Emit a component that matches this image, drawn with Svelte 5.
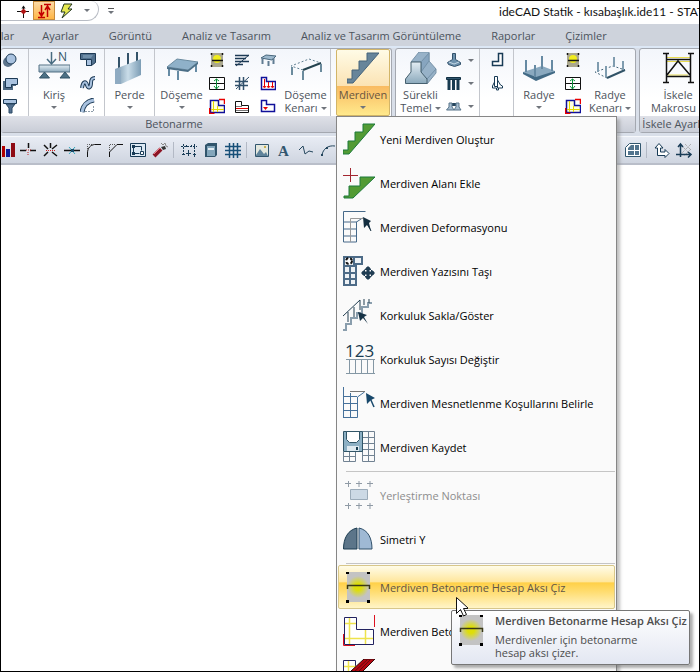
<script lang="ts">
    interface MenuItem {
        label: string;
        icon: string;
        disabled?: boolean;
        active?: boolean;
    }

    const tabs = [
        'Araçlar',
        'Ayarlar',
        'Görüntü',
        'Analiz ve Tasarım',
        'Analiz ve Tasarım Görüntüleme',
        'Raporlar',
        'Çizimler'
    ];

    const menu: MenuItem[][] = [
        [
            { label: 'Yeni Merdiven Oluştur', icon: 'stairNew' },
            { label: 'Merdiven Alanı Ekle', icon: 'stairArea' },
            { label: 'Merdiven Deformasyonu', icon: 'deform' },
            { label: 'Merdiven Yazısını Taşı', icon: 'moveText' },
            { label: 'Korkuluk Sakla/Göster', icon: 'railing' },
            { label: 'Korkuluk Sayısı Değiştir', icon: 'railCount' },
            { label: 'Merdiven Mesnetlenme Koşullarını Belirle', icon: 'support' },
            { label: 'Merdiven Kaydet', icon: 'save' }
        ],
        [
            { label: 'Yerleştirme Noktası', icon: 'point', disabled: true },
            { label: 'Simetri Y', icon: 'mirror' }
        ],
        [
            { label: 'Merdiven Betonarme Hesap Aksı Çiz', icon: 'axis', active: true },
            { label: 'Merdiven Betonarme Çiz', icon: 'plan' },
            { label: 'Merdiven Çizimini Sil', icon: 'erase' }
        ]
    ];

    const toolbar = [
        ['chart', 'cross', 'burst', 'snap', 'fillet', 'chamfer', 'region', 'wand'],
        ['dims', 'book', 'grid'],
        ['image', 'letter', 'polyline', 'arc']
    ];

    // Drawing bodies; small ones use a 16 unit box, large ones a 32 unit box
    const small: Record<string, string> = {
        column: '<circle cx="6" cy="10" r="5" fill="#5d748b"/><circle cx="9" cy="7" r="5" fill="#a9c2df" stroke="#1d3a55"/>',
        corbel: '<path d="M1 6h3v7h-3zM1 13h8v-4h5v2h-3v4H1z" fill="#4f6a84"/><path d="M3.500 3.500h12v6h-6v3h-6z" fill="#a9c2df" stroke="#1d3a55"/>',
        funnel: '<path d="M1.500 1.500h13v4h-13z" fill="#a9c2df" stroke="#1d3a55"/><path d="M4 6h9l-3 4v5H7v-5z" fill="#53708f" stroke="#2a4864"/>',
        beamL: '<path d="M.5 1.500h15v9l-4 3h-5v-6h-6z" fill="#51708d" stroke="#1d3a55"/><path d="M6.500 7.500h5v6h-5z" fill="#a9c2df" stroke="#1d3a55"/><path d="M3 3h10l-2 3H3z" fill="#6f8faa"/>',
        wave: '<path d="M2 13c1-7 4-7 5-3s4 3 4-2 2-5 4-5" fill="none" stroke="#1d3a55" stroke-width="4"/><path d="M2 13c1-7 4-7 5-3s4 3 4-2 2-5 4-5" fill="none" stroke="#a9c2df" stroke-width="2"/>',
        curve: '<path d="M2 14C3 8 7 3 14 2" fill="none" stroke="#1d3a55" stroke-width="5"/><path d="M2 14C3 8 7 3 14 2" fill="none" stroke="#a9c2df" stroke-width="3"/><path d="M5.500 13.500h8v-7" fill="none" stroke="#1d3a55" stroke-dasharray="1 2"/>',
        axis: '<path d="M2 1h12v14H2z" fill="#aaa78e"/><circle cx="8" cy="7" r="4" fill="#f1ed1e"/><path d="M3 8.500h11M2.500 1v2m11-2v2M2.500 13v2m11-2v2" stroke="#111" stroke-width="1.500"/>',
        frame: '<path d="M.5 2.500h15v12H.5zM1 8.500h14" fill="#fff" stroke="#111"/><path d="M7.500 4v10M5 6l2.500-2L10 6M5 11l2.500 3 2.500-3" fill="none" stroke="#089037"/>',
        plan: '<path d="M1.500 2.500h8v5h6v7h-14z" fill="#ffffdf" stroke="#10109a" stroke-width="1.500"/><path d="M4.500 3v11M2 11.500h13M8.500 8v6" stroke="#e5d900"/><path d="M10 1.500h5.500V6M.5 10v5.500h5" fill="none" stroke="#e80000" stroke-width="1.500"/>',
        hatchA: '<path d="M1 3.500h14M1 6.500h11M1 9.500h14M1 12.500h8" stroke="#1d3a55" stroke-width="1.500"/><path d="M2 14L15 3" stroke="#1d3a55"/>',
        hatchB: '<path d="M1 6.500h13M1 10.500h13M5.500 2v13M9.500 2v13" stroke="#31506b" stroke-width="1.500"/><path d="M2 14L15 2" stroke="#31506b"/>',
        rebar: '<path d="M1.500 3.500h6v4h7v7h-13z" fill="#fff" stroke="#111"/><path d="M2 8.500h6M2 12.500h12" stroke="#777"/><path d="M2 10.500h12" stroke="#e80000"/>',
        table: '<path d="M1 6l5-3 10 1-4 4z" fill="#9db9cd" stroke="#47667c"/><path d="M2.500 7v5M8.500 9v5M13.500 6v6" stroke="#607c92" stroke-width="2"/>',
        load: '<path d="M1.500 2.500h5v4h9v8h-14z" fill="#fff" stroke="#10109a" stroke-width="1.500"/><path d="M4.500 4v8m4-5v5m4-5v5M3 11l1.500 2L6 11m1 0 1.500 2 1.500-2m1 0 1.500 2 1.500-2" fill="none" stroke="#e80000"/>',
        mark: '<path d="M1.500 2.500h5v4h8v7h-13z" fill="#fff" stroke="#10109a" stroke-width="1.500"/><path d="M3 9h5l-2.500 3z" fill="#e80000"/>',
        footing: '<path d="M6.500 1.500h3v6l5 3v2l-6 2-6-2-1-2 5-3z" fill="#6d91ad" stroke="#31516b"/><path d="M3 10l5 2 5-2" fill="none" stroke="#c4d7e4"/>',
        piles: '<path d="M.5 2.500h14v2H.5z" fill="#31566e" stroke="#102f42"/><path d="M3 5v10M7.500 5v10M12 5v10" stroke="#183b50" stroke-width="3"/>',
        pads: '<path d="M4 5h8v3H4z" fill="#26465e"/><path d="M3 5h3v4l2 3H.5L3 9zM10 5h3v4l2 3H8l2-3z" fill="#a5bccf" stroke="#58748a"/>',
        wallL: '<path d="M10.500 1.500h4v12h-10v-4h6z" fill="#fff" stroke="#183b56" stroke-width="1.500"/>',
        wallT: '<path d="M6.500 1.500h3v10h-3z" fill="#fff" stroke="#183b56"/><path d="M9.500 5l3 5 2 1v2h-5z" fill="#fff" stroke="#183b56"/><path d="M6.500 7l-2 4v2h4v2h2v-2" fill="none" stroke="#183b56"/>',
        chart: '<path d="M1 4h3v11H1z" fill="#b10000"/><path d="M5 7h4v8H5z" fill="#101b9a"/><path d="M10 1h4v14h-4z" fill="#8f0b14"/>',
        cross: '<path d="M0 8.500h6m4 0h6M8.500 1v5" stroke="#111" stroke-width="1.500"/><path d="M6 8h5M8 10v4" stroke="#bd2020" stroke-dasharray="1 1"/>',
        burst: '<path d="M8.500 1v5M2 3l4 4m9-4-5 4M2 14l4-4m9 4-5-4" stroke="#111" stroke-width="1.500"/><path d="M4 8.500h9" stroke="#d22020" stroke-dasharray="1 1"/>',
        snap: '<path d="M0 8.500h16" stroke="#111" stroke-width="1.500"/><path d="M5 5l6 7m0-7-6 7" stroke="#35a8be"/><path d="M7 7h3v3H7z" fill="#174a69"/>',
        fillet: '<path d="M1.500 15v-4c0-5 3-8 7-8.500H15" fill="none" stroke="#111"/><path d="M1.500 9V2.500H8" fill="none" stroke="#555" stroke-dasharray="1 1"/>',
        chamfer: '<path d="M1.500 15v-5L9 2.500h6" fill="none" stroke="#111"/><path d="M1.500 8V2.500H8" fill="none" stroke="#555" stroke-dasharray="1 1"/>',
        region: '<path d="M.5 1.500h15v13H.5z" fill="#dce9f4" stroke="#183b56"/><path d="M3.500 11.500v-7h8v4M3.500 11.500h6" fill="none" stroke="#183b56"/><path d="M2 3h3v3H2zM2 10h3v3H2z" fill="#183b56"/><path d="M10.500 9.500h3v3h-3z" fill="#fff" stroke="#183b56"/>',
        wand: '<path d="M2 14l7-7" stroke="#8c1525" stroke-width="4"/><path d="M2 12l6-6" stroke="#ee7b85"/><path d="M9 5l2 3 3-1-1-3z" fill="#333"/><path d="M9 1l2 2 2-2 1 3 2 1" fill="none" stroke="#888"/>',
        dims: '<path d="M2.500 2v12M13.500 2v8M0 4.500h16M5.500 3v3M10.500 3v3" fill="none" stroke="#183b56" stroke-dasharray="2 1"/><path d="M7.500 8v6M5 11.500h5M1 12.500h3m8 0h3M13.500 11v4" stroke="#183b56"/>',
        book: '<path d="M2 3l3-2h9v12l-2 2H2z" fill="#31556c"/><path d="M4 4h8v10H4z" fill="#83a6bb"/><path d="M5 6h6v2H5z" fill="#e3edf3"/>',
        grid: '<path d="M0 4.500h16M0 8.500h16M0 12.500h16M4.500 1v15M8.500 1v15M12.500 1v15" stroke="#164f78" stroke-width="1.500"/>',
        image: '<path d="M1.500 2.500h13v12h-13z" fill="#e4e8df" stroke="#31566e"/><circle cx="11" cy="5" r="1" fill="#be9b20"/><path d="M2 13l4-6 4 5 2-2 2 4H2z" fill="#60849b"/>',
        letter: '<text x="2" y="14" font-family="Liberation Serif, serif" font-size="15" font-weight="700" fill="#31566e">A</text>',
        polyline: '<path d="M1 8l4-4 2 8 4-3 4 1" fill="none" stroke="#24465d"/>',
        arc: '<path d="M2 13C3 7 8 3 15 4" fill="none" stroke="#24465d"/><path d="M1 12h2v2H1zM6 5h2v2H6z" fill="#24465d"/>',
        layout: '<path d="M4.500 1.500h11v13H.5v-9z" fill="#fff" stroke="#31566e"/><path d="M6 3h3v5H3V6zM10 3h4v5h-4zM3 9h6v4H3zM10 9h4v4h-4z" fill="#52748d"/>',
        origin: '<path d="M3.500 13.500V6H1l4-4.500L9 6H6.500v4H11V7.500l4 4-4 4v-2z" fill="#fff" stroke="#183b56"/>',
        axes: '<path d="M4 2l11 11M9 2l6 6M15 2L5 12m10-5-7 7" stroke="#999" stroke-dasharray="1 1"/><path d="M4.500 15V2M0 12.500h15M2 5l2.500-3L7 5m5 5 3 2.500-3 3" fill="none" stroke="#183b56" stroke-width="1.500"/>',
        node: '<path d="M2 8.500h12M8.500 4v11" stroke="#111"/><path d="M8.500 5.500l3 3-3 3-3-3z" fill="#b01212"/><path d="M6.500 5.500h4l-2-3z" fill="#111"/>',
        updown: '<path d="M5.500 2v11M3 9l2.500 4L8 9M2 14.500h7M11.500 3v11M9 7l2.500-4L14 7M8 1.500h7" fill="none" stroke="#c40000" stroke-width="1.500"/>',
        bolt: '<path d="M6 1h8l-4 5h4L4 15l3-6H3z" fill="#e6e850" stroke="#20351f"/>'
    };

    const steps = 'M20 1h12L6 31H0v-4h5v-9h7V9h8z';

    const large: Record<string, string> = {
        beam: '<path d="M1 13h31v7H1z" fill="url(#beam)" stroke="#527184"/><path d="M6.500 20l-5 6h10zM27 20l-5 6h10z" fill="#4d7185" stroke="#315367"/><path d="M13.500 0v12M9 7l4.500 5L18 7" fill="none" stroke="#476b80" stroke-width="1.500"/><text x="20" y="9" font-family="Open Sans, sans-serif" font-size="12" fill="#315367">N</text>',
        wall: '<path d="M5 5v14M14 1v14M23 0v12" stroke="#345369" stroke-width="2"/><path d="M1 17L27 7v16L7 32H1z" fill="url(#steel)"/><path d="M1 17l6 1v14H1z" fill="#8fabc2"/>',
        slab: '<path d="M3 16v8M12 19v9M30 12v8" stroke="#668ba4" stroke-width="2"/><path d="M1 15L11 7l21 3-10 8z" fill="#8fb1c9" stroke="#6b8ba0"/><path d="M1 15l21 3 10-8v2l-10 8L1 17z" fill="#4b6e86"/>',
        slabEdge: '<path d="M13 18L1 14l18-7 12 4" fill="none" stroke="#607f91" stroke-dasharray="2 2"/><path d="M31 11L13 18" stroke="#24434f" stroke-width="2"/><path d="M2 15v8M13 19v9M31 12v8" stroke="#6b8b9d" stroke-width="2"/>',
        stair: `<path d="${steps}" fill="#67859a" stroke="#46647b"/>`,
        stairNew: `<path d="${steps}" fill="#539b34" stroke="#1c7a3a"/>`,
        stairArea: '<path d="M17 10h15L10 31H1v-2h5V19h11z" fill="#539b34" stroke="#1c7a3a"/><path d="M0 8.500h15M7.500 1v14" stroke="#a32630"/>',
        deform: '<path d="M.5 31V.5h22M.5 31h13V11l6-4M1 11h13M1 18h13M1 25h13" fill="none" stroke="#466989"/><path d="M7.500 31V7.500H20" fill="none" stroke="#999"/><path d="M20 6l8 4-2 2 2 8-4-6-3 3z" fill="#152f40"/><path d="M24 12l4 8" stroke="#152f40"/>',
        moveText: '<path d="M0 1h20v9H0zM0 10h14v21H0z" fill="#4d6b87"/><path d="M2 3h8v7H2zM12 3h6v5h-6zM2 12h4v5H2zm6 0h4v5H8zM2 19h4v4H2zm6 0h4v4H8zM2 25h4v4H2zm6 0h4v4H8z" fill="#eef2f5"/><circle cx="6" cy="6" r="3" fill="#fff" stroke="#111" stroke-width="2" stroke-dasharray="3 2"/><path d="M25 12v12M19 18h12" stroke="#203d53" stroke-width="3"/><path d="M25 11l4 4h-8zM25 25l4-4h-8zM18 18l4-4v8zM32 18l-4-4v8z" fill="#203d53"/>',
        railing: '<path d="M0 31h3v-6h5v-6h6v-5h5V8h6V4h4" fill="none" stroke="#8a9ead" stroke-width="2"/><path d="M0 17L17 1M5 13v10M11 8v10M17 1v10M21 0v6M26 0v4" fill="none" stroke="#233f51"/><path d="M15 13l9 3-3 2 4 7-5-6-3 3z" fill="#173346"/>',
        railCount: '<text x="2" y="14" font-family="Open Sans, sans-serif" font-size="17" fill="#173b50">123</text><path d="M3 16.500h29M3 30.500h29M6.500 17v14M12.500 17v14M18.500 17v14M24.500 17v14M30.500 17v14" stroke="#8497a4"/>',
        support: '<path d="M.5 0v31M.5 30.500h14V10l7-5M1 9.500h13M1 16.500h13M1 23.500h13M7.500 6v25" fill="none" stroke="#46719b"/><path d="M7 4.500h15" stroke="#777"/><path d="M23 6l9 5-4 2-4 4z" fill="#18486b"/><path d="M27 11l4 9" stroke="#18486b" stroke-width="1.500"/>',
        save: '<path d="M.5 21v9.500h12V21M6.500 21v10M1 25.500h11M19.500 1v29.500h12V.5h-12M25.500 1v30M20 6.500h11M20 12.500h11M20 18.500h11M20 24.500h11" fill="none" stroke="#718292"/><path d="M.5.500h19v20H.5z" fill="#8db0c4" stroke="#315567"/><path d="M3.500.500h13v8l-3 3h-7l-3-3z" fill="#fff" stroke="#315567"/><path d="M4 15h12v5H4z" fill="#dfeaf0"/><path d="M13 16h2v3h-2z" fill="#193d50"/>',
        point: '<path d="M7.500 10.500h17v10h-17z" fill="#ccd9e5" stroke="#9babb9"/><path d="M2 4.500h6m5 0h6m5 0h6M5.500 2v6m10.500-6v6m11-6v6M2 26.500h6m5 0h6m5 0h6M5.500 24v6m10.500-6v6m11-6v6" stroke="#8f9aa5"/>',
        mirror: '<path d="M14 5v21H.5C.5 15 5 7 14 5z" fill="#5c7589" stroke="#1d3d51"/><path d="M16 5v21h13C29 15 25 7 16 5z" fill="#9fb9d4" stroke="#31516b"/>',
        axis: '<path d="M4 1h23v30H4z" fill="#c3c3c3"/><circle cx="15" cy="16" r="11" fill="url(#glow)"/><path d="M4.500 18v-3.500h22V18" fill="none" stroke="#3a3917" stroke-width="1.500"/><path d="M3 1h3v2H3zM24 1h3v2h-3zM3 29h3v3H3zM24 29h3v3h-3z"/>',
        plan: '<path d="M1.500 2.500h12v12h17v15h-29z" fill="#fff" stroke="#22225f"/><path d="M6.500 3v26M2 8.500h11M2 23.500h28M22.500 15v14" stroke="#eee34c" stroke-width="1.500"/><path d="M31.500 0v12M.5 19v11.500H12" fill="none" stroke="#dd1120"/>',
        erase: '<path d="M.5 1.500h12v12h18v17H.5z" fill="#fff" stroke="#26265f"/><path d="M5.500 2v28M1 7.500h12" stroke="#eee34c" stroke-width="1.500"/><path d="M8 12L21 0h11L18 14z" fill="#b50711" stroke="#32090a"/><path d="M11 13L25 0m3 0L14 14" stroke="#650a10"/><path d="M8 12l8 5-10 3z" fill="#e6d647"/>',
        footing: '<path d="M6 10L14 0h10v9l7 8v4l-9 11-6-12V10z" fill="#97b2c8" stroke="#7893a8"/><path d="M16 10L24 1v8l-8 11zM22 27l9-10" fill="#87a5bf" stroke="#7391a8"/><path d="M6 10h10v10l6 7v4.500H.5V27L6 20z" fill="url(#beam)" stroke="#46606f"/>',
        raft: '<path d="M0 20l19-6 13 5-19 8z" fill="#8aa9bf"/><path d="M0 20l13 5 19-6v2l-19 8L0 22z" fill="#426a85"/><path d="M3 8v12M12 13v12M19 4v13M29 8v11" stroke="#668aa3" stroke-width="2"/>',
        raftEdge: '<path d="M13 26L1 20l18-6 12 4" fill="none" stroke="#45677b" stroke-dasharray="2 2"/><path d="M13 26l18-8" stroke="#315367" stroke-width="2"/><path d="M4 10v10M12 14v11M20 5v10M29 9v9" stroke="#7f9caf" stroke-width="2"/>',
        scaffold: '<path d="M4 5.500h25M4 9.500h25M6 23h20" stroke="#e9dc51"/><path d="M4.500 1v30M28.500 1v30M1 1.500h6m19 0h6M1 30.500h6m19 0h6M5 7.500h23M5 24.500h23M5 23L16 9l12 14" fill="none" stroke="#111" stroke-width="1.500"/>'
    };
</script>

{#snippet icon(name: string)}
    <svg class="icon" viewBox="0 0 16 16" aria-hidden="true">{@html small[name]}</svg>
{/snippet}

{#snippet picture(name: string)}
    <svg class="picture" viewBox="0 0 32 32" aria-hidden="true">{@html large[name]}</svg>
{/snippet}

{#snippet column(names: string[], arrows = false)}
    <div class="column">
        {#each names as name}
            <button class="tool" aria-label={name}>
                {@render icon(name)}
                {#if arrows}<i class="arrow"></i>{/if}
            </button>
        {/each}
    </div>
{/snippet}

{#snippet command(name: string, first: string, second = '')}
    <button class="command">
        {@render picture(name)}
        <span>{first}</span>
        {#if second}
            <span>{second}<i class="arrow"></i></span>
        {:else}
            <i class="arrow"></i>
        {/if}
    </button>
{/snippet}

<svg class="defs" aria-hidden="true">
    <defs>
        <linearGradient id="steel">
            <stop offset="0" stop-color="#7594ab" />
            <stop offset="0.5" stop-color="#c9dce8" />
            <stop offset="1" stop-color="#7c9db5" />
        </linearGradient>
        <linearGradient id="beam" x2="0" y2="1">
            <stop offset="0" stop-color="#e3edf3" />
            <stop offset="1" stop-color="#8ba9bc" />
        </linearGradient>
        <radialGradient id="glow">
            <stop offset="0.3" stop-color="#dede08" />
            <stop offset="1" stop-color="#c3c3c3" />
        </radialGradient>
    </defs>
</svg>

<div class="window">
    <header>
        <div class="quick">
            <button class="tool" aria-label="Düğüm">{@render icon('node')}</button>
            <button class="tool lit" aria-label="Kot">{@render icon('updown')}</button>
            <button class="tool" aria-label="Hızlı">{@render icon('bolt')}</button>
            <button class="tool" aria-label="Seçenekler"><i class="arrow"></i></button>
        </div>
        <button class="customize" aria-label="Özelleştir"><i class="arrow"></i></button>
        <h1>ideCAD Statik - kısabaşlık.ide11 - STATİK</h1>
    </header>

    <nav>
        {#each tabs as tab}
            <a href="#{tab}">{tab}</a>
        {/each}
    </nav>

    <div class="ribbon">
        <section class="group concrete">
            <div class="commands">
                {@render column(['column', 'corbel', 'funnel'])}
                {@render command('beam', 'Kiriş')}
                {@render column(['beamL', 'wave', 'curve'])}
                {@render command('wall', 'Perde')}
                {@render command('slab', 'Döşeme')}
                {@render column(['axis', 'frame', 'plan'])}
                {@render column(['hatchA', 'hatchB', 'rebar'])}
                {@render column(['table', 'load', 'mark'])}
                {@render command('slabEdge', 'Döşeme', 'Kenarı')}
                <div class="dropdown">
                    <button class="command open" aria-expanded="true">
                        {@render picture('stair')}
                        <span>Merdiven</span>
                        <i class="arrow"></i>
                    </button>
                    <div class="menu" role="menu">
                        {#each menu as section}
                            <div class="section">
                                {#each section as item}
                                    <div class="entry">
                                        <button role="menuitem" class="item" class:active={item.active} disabled={item.disabled}>
                                            {@render picture(item.icon)}
                                            {item.label}
                                        </button>
                                        {#if item.active}
                                            <div class="tooltip" role="tooltip">
                                                {@render picture('axis')}
                                                <div>
                                                    <strong>{item.label}</strong>
                                                    <p>Merdivenler için betonarme hesap aksı çizer.</p>
                                                </div>
                                            </div>
                                            <svg class="cursor" viewBox="0 0 12 20" aria-hidden="true">
                                                <path d="M.5.500v16l4-4 3 6.500 3-1.500-3-6h5z" fill="#fff" stroke="#111" />
                                            </svg>
                                        {/if}
                                    </div>
                                {/each}
                            </div>
                        {/each}
                    </div>
                </div>
            </div>
            <h2>Betonarme</h2>
        </section>

        <section class="group foundation">
            <div class="commands">
                {@render command('footing', 'Sürekli', 'Temel')}
                {@render column(['footing', 'piles', 'pads'], true)}
                {@render column(['wallL', 'wallT'])}
                {@render command('raft', 'Radye')}
                {@render column(['axis', 'frame', 'plan'])}
                {@render command('raftEdge', 'Radye', 'Kenarı')}
            </div>
            <h2>Temel</h2>
        </section>

        <section class="group scaffold">
            <div class="commands">
                {@render command('scaffold', 'İskele', 'Makrosu')}
            </div>
            <h2>İskele Ayarları</h2>
        </section>
    </div>

    <div class="toolbar">
        {#each toolbar as set}
            <div class="set">
                {#each set as name}
                    <button class="tool" aria-label={name}>{@render icon(name)}</button>
                {/each}
            </div>
        {/each}
        <div class="set last">
            <button class="tool" aria-label="layout">{@render icon('layout')}</button>
        </div>
        <div class="set">
            <button class="tool" aria-label="origin">{@render icon('origin')}</button>
            <button class="tool" aria-label="axes">{@render icon('axes')}</button>
        </div>
    </div>
</div>

<style>
    :global(body) {
        margin: 0;
    }
    .window {
        box-sizing: border-box;
        height: 100vh;
        overflow: hidden;
        border: 1px solid #000;
        background: #fff;
        color: #4c535c;
        font-family: 'Open Sans', 'Noto Sans', sans-serif;
        font-size: 11px;
        line-height: 13px;
    }
    .defs {
        position: absolute;
        width: 0;
        height: 0;
    }
    button {
        display: flex;
        align-items: center;
        padding: 0;
        border: 0;
        background: none;
        color: inherit;
        font: inherit;
        white-space: nowrap;
    }
    h1,
    h2,
    p {
        margin: 0;
        font-size: inherit;
        font-weight: 400;
    }
    .icon {
        flex: none;
        width: 16px;
        height: 16px;
    }
    .picture {
        flex: none;
        width: 32px;
        height: 32px;
    }
    .arrow {
        display: inline-block;
        border: 3px solid transparent;
        border-top-color: #70757c;
        border-bottom: 0;
    }

    header {
        display: flex;
        align-items: center;
        height: 23px;
    }
    .quick {
        box-sizing: border-box;
        display: flex;
        align-items: center;
        width: 98px;
        height: 20px;
        margin-bottom: 3px;
        padding-left: 11px;
        border: solid #b8bcc4;
        border-width: 0 1px 1px 0;
        border-radius: 0 8px 12px 0;
    }
    .quick .tool {
        justify-content: center;
        width: 22px;
        height: 19px;
    }
    .quick .lit {
        border: 1px solid #c78b3c;
        background: linear-gradient(#fbd9a5, #ffb646);
    }
    .customize {
        margin: 0 0 4px 9px;
        padding-top: 2px;
        border-top: 1px solid #555;
    }
    h1 {
        margin-left: auto;
        width: 200px;
        height: 22px;
        overflow: hidden;
        color: #111;
        font-family: Lato, 'Open Sans', sans-serif;
        font-size: 12px;
        line-height: 20px;
        white-space: nowrap;
    }

    nav {
        display: flex;
        gap: 30px;
        height: 22px;
        align-items: center;
        overflow: hidden;
        background: #ced3dc;
        border-bottom: 2px solid #dce7f5;
    }
    nav a {
        color: inherit;
        text-decoration: none;
        white-space: nowrap;
    }
    nav a:first-child {
        margin: 0 -2px 0 -23px;
    }

    .ribbon {
        display: flex;
        gap: 3px;
        height: 85px;
        padding-bottom: 3px;
        background: #d9dfe9;
    }
    .group {
        box-sizing: border-box;
        flex: none;
        border: 1px solid #a4a8b0;
        border-radius: 3px;
        background: linear-gradient(#f3f6fb, #fff 60%);
    }
    .group:first-child {
        border-left: 0;
    }
    .commands {
        display: grid;
        height: 67px;
    }
    .concrete .commands {
        grid-template-columns: 28px 50px 26px 50px 53px 25px 26px 22px 50px 60px;
    }
    .foundation .commands {
        grid-template-columns: 49px 35px 34px 50px 21px 50px;
    }
    .scaffold .commands {
        grid-template-columns: 76px;
    }
    h2 {
        height: 16px;
        background: linear-gradient(#dfe1e8, #c9cdd7);
        line-height: 16px;
        text-align: center;
    }
    .concrete h2 {
        padding-right: 44px;
    }
    .column {
        display: flex;
        flex-direction: column;
        gap: 7px;
        padding: 3px 1px 0;
    }
    .column .tool {
        gap: 6px;
    }
    .concrete .column:nth-child(1),
    .concrete .column:nth-child(3),
    .concrete .command:nth-child(4),
    .concrete .command:nth-child(9),
    .foundation .column:nth-child(2),
    .foundation .column:nth-child(3) {
        border-right: 1px solid #c3c6cc;
    }
    .foundation .column:nth-child(3) {
        padding-left: 8px;
    }
    .command {
        flex-direction: column;
        padding-top: 3px;
    }
    .command .picture {
        margin-bottom: 4px;
    }
    .command > .arrow {
        margin-top: 5px;
    }
    .command span .arrow {
        margin: 0 0 2px 3px;
    }
    .dropdown {
        position: relative;
        padding-left: 5px;
    }
    .open {
        box-sizing: border-box;
        width: 54px;
        height: 67px;
        border: 1px solid #d2b568;
        border-radius: 2px;
        padding-top: 2px;
        background: linear-gradient(#fffbe6, #fbe3b4 55%, #f9bb62 56%, #ffe98c);
        color: #69543f;
    }

    .menu {
        position: absolute;
        z-index: 1;
        top: 100%;
        left: 5px;
        box-sizing: border-box;
        width: 281px;
        padding: 0 1px 1px;
        border: 1px solid #868686;
        background: #fafafa;
        box-shadow: 3px 3px 3px #8888;
        color: #000;
    }
    .section + .section::before {
        content: '';
        display: block;
        height: 1px;
        margin: 2px 0 1px 8px;
        background: #c5c5c5;
    }
    .entry {
        position: relative;
    }
    .item {
        box-sizing: border-box;
        gap: 5px;
        width: 100%;
        height: 44px;
        padding: 0 5px;
    }
    .item:disabled {
        color: #8d8d8d;
    }
    .active {
        border: 1px solid #d8c78a;
        border-radius: 2px;
        padding: 0 4px;
        background: linear-gradient(#fffce8, #ffe69b 38%, #ffd048 40%, #ffdc6e 60%, #fff5c8);
        color: #5f5545;
    }
    .tooltip {
        position: absolute;
        z-index: 2;
        top: 45px;
        left: 113px;
        display: flex;
        gap: 7px;
        box-sizing: border-box;
        width: 239px;
        padding: 3px 4px 5px;
        border: 1px solid #767676;
        border-radius: 2px;
        background: linear-gradient(#fff, #e3e7f2);
        box-shadow: 3px 3px 3px #6668;
        color: #4c4c4c;
    }
    .tooltip strong {
        font-weight: 600;
        white-space: nowrap;
    }
    .tooltip p {
        width: 150px;
        margin-top: 6px;
    }
    .cursor {
        position: absolute;
        z-index: 3;
        top: 32px;
        left: 118px;
        width: 12px;
        height: 20px;
    }

    .toolbar {
        display: flex;
        align-items: center;
        height: 26px;
        border-top: 1px solid #f7f9fc;
        border-bottom: 2px solid #b9bec9;
        background: linear-gradient(#e8ecf4, #cfd5e0);
    }
    .set {
        display: flex;
        padding: 0 2px;
    }
    .set + .set:not(.last) {
        border-left: 1px solid #b3b9c5;
        padding-left: 4px;
    }
    .set:first-child {
        padding-left: 0;
    }
    .toolbar .tool {
        justify-content: center;
        width: 22px;
    }
    .toolbar .set:first-child .tool:first-child {
        width: 16px;
    }
    .last {
        margin-left: auto;
    }
    .last + .set {
        padding-right: 4px;
    }
</style>
